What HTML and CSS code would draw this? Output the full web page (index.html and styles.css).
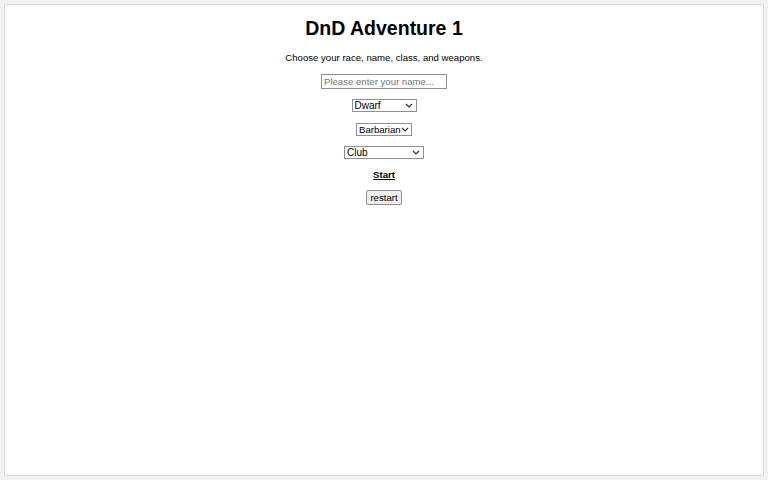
FILE: index.html
```html
<!DOCTYPE html>
<html lang="en">

<head>
    <meta charset="UTF-8">
    <meta name="viewport" content="width=device-width, initial-scale=1.0">
    <title>DnD Adventure 1</title>
    <link rel="stylesheet" href="styles.css">
</head>

<body>
    <div class="container">
        <h1>DnD Adventure 1</h1>
        <p class="intro">Choose your race, name, class, and weapons.</p>

        <form id="charForm" action="#">
            <div class="row">
                <input type="text" id="name" placeholder="Please enter your name...">
            </div>
            <div class="row">
                <select id="race" class="race">
                    <option>Dwarf</option>
                    <option>Elf</option>
                    <option>Human</option>
                </select>
            </div>
            <div class="row">
                <select id="klass" class="klass">
                    <option>Barbarian</option>
                    <option>Wizard</option>
                    <option>Rogue</option>
                </select>
            </div>
            <div class="row">
                <select id="weapon" class="weapon">
                    <option>Club</option>
                    <option>Sword</option>
                    <option>Bow</option>
                </select>
            </div>
            <div class="row">
                <a href="#" class="start">Start</a>
            </div>
            <div class="row">
                <button type="button" id="restart">restart</button>
            </div>
        </form>
    </div>
</body>

</html>
```

FILE: styles.css
```css
* {
    box-sizing: border-box;
}

html,
body {
    margin: 0;
    height: 100%;
    background-color: #f2f2f2;
    font-family: "Liberation Sans", Arial, sans-serif;
}

body {
    padding: 4px;
}

.container {
    background-color: #fff;
    border: 1px solid #dcdcdc;
    height: 100%;
    text-align: center;
    padding-top: 13px;
}

h1 {
    margin: 0;
    font-size: 19.5px;
    line-height: 20px;
    color: #000;
}

.intro {
    margin: 14px 0 6px;
    font-size: 9.6px;
    line-height: 12px;
}

.row {
    height: 23.3px;
    display: flex;
    justify-content: center;
    align-items: center;
}

input,
select,
button {
    font-family: "Liberation Sans", Arial, sans-serif;
    font-size: 9.6px;
    color: #000;
}

input[type="text"] {
    width: 126px;
    height: 15px;
    padding: 0 2px;
    border: 1px solid #8f8f8f;
}

input::placeholder {
    color: #757575;
}

/* flat select with a small chevron on the right */
select {
    appearance: none;
    -webkit-appearance: none;
    height: 13px;
    margin-top: 2px;
    padding: 0 14px 0 2px;
    font-size: 10px;
    line-height: 11px;
    border: 1px solid #8f8f8f;
    border-radius: 0;
    background: #fff url("data:image/svg+xml,%3Csvg xmlns='http://www.w3.org/2000/svg' width='8' height='5' viewBox='0 0 8 5'%3E%3Cpath d='M1 1l3 3 3-3' fill='none' stroke='%23333' stroke-width='1.2'/%3E%3C/svg%3E") no-repeat right 3px center;
    text-align: left;
}

.race {
    width: 65px;
}

.klass {
    width: 56px;
    padding: 0 8px 0 2px;
    font-size: 9.6px;
    background-position: right 2px center;
}

.weapon {
    width: 80px;
}

.start {
    color: #000;
    font-weight: bold;
    font-size: 9.6px;
}

button {
    height: 15px;
    margin-top: -2px;
    padding: 0 3px;
    background-color: #efefef;
    border: 1px solid #8f8f8f;
    border-radius: 2px;
}
```
